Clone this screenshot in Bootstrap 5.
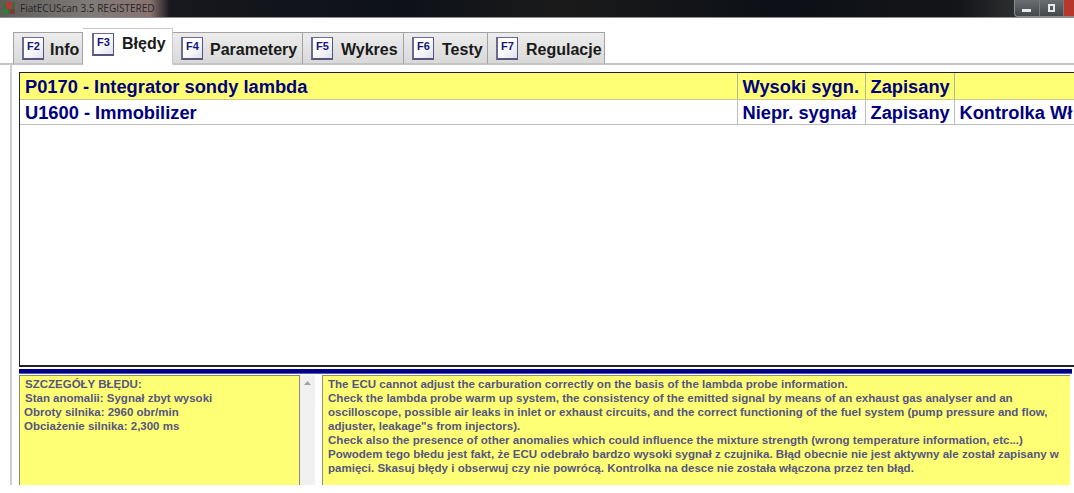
<!DOCTYPE html>
<html lang="pl">
<head>
<meta charset="utf-8">
<title>FiatECUScan</title>
<link href="https://cdn.jsdelivr.net/npm/bootstrap@5.3.0/dist/css/bootstrap.min.css" rel="stylesheet">
<style>
html,body{height:493px;overflow:hidden;background:#fff;font-family:"Liberation Sans",Arial,sans-serif}
.win-title{height:18px;background:linear-gradient(90deg,#5f5c5a 0,#7f7b79 90px,#8a7270 150px,#17181e 170px,#0d1118 400px,#1a1a1a 560px,#0c1016 780px,#141518 960px,#2c2d2f 1012px);border-bottom:1px solid #8f8f8f;color:#262626;font-size:10px;font-family:"Open Sans",sans-serif;line-height:16px;overflow:hidden}
.app-ico{width:14px;height:14px;margin:1px 4px 0 2px;flex:none}
.win-btns{width:60px;height:17px;background:linear-gradient(#6a6e72,#44474a);border-radius:0 0 0 4px;border:1px solid #8a8d90;border-top:0;border-right:0;overflow:hidden}
.wb{flex:1;border-right:1px solid #77797b;display:flex;align-items:center;justify-content:center}
.wb-close{background:#b5382a;flex:0 0 10px;border-right:0}
.wb-min{width:9px;height:3px;background:#e8e8e8;margin-top:5px}
.wb-max{width:7px;height:8px;border:2px solid #e8e8e8}
.tabstrip{height:47px;padding-left:13px;align-items:flex-end;border-bottom:2px solid #c4c4c4;margin-left:0;flex-wrap:nowrap}
.tab-i{height:33px;margin-bottom:-2px;background:linear-gradient(#ececec,#d9d9d9);border:1px solid #a2a2a2;border-bottom:2px solid #c4c4c4;border-left-width:0;padding:0 0 0 8px;font-size:16px;font-weight:700;color:#1a1a1a;gap:8px}
.tab-i:first-child{border-left-width:1px;gap:6px}
.tab-i.tab-p{gap:7px}
.tab-i>span:last-child{padding-top:3px}
.tab-on{height:37px;background:#fff;border-color:#c8c8c8;border-bottom-color:#fff;padding-bottom:4px;padding-left:9px;gap:8px}
.tab-on>span:last-child{padding-top:0}
.fkey{width:22px;height:23px;flex:none;border:1px solid #6c6a92;border-right-color:#55557a;border-bottom:2px solid #55557a;border-left-width:2px;background:linear-gradient(135deg,#fff 40%,#dfe0ee);color:#15157a;font-size:11px;font-weight:700;text-align:center;line-height:17px}
.main-pane{border-left:2px solid #cfcfcf;margin-left:10px;padding:7px 0 0 7px;height:420px}
.grid-wrap{height:295px;border:1px solid #222;border-right:0;border-bottom-width:2px;overflow:hidden;background:#fff}
.err-table{width:1060px;table-layout:fixed;margin:0;font-size:18.3px;font-weight:700;color:#00007e;border-collapse:collapse}
.err-table td{padding:2px 0 0 5px;height:26px;line-height:23px;white-space:nowrap;overflow:hidden;background:transparent;color:#00007e;border:0;border-right:1px solid #b3b3a0;border-bottom:1px solid #bdbdbd;box-shadow:none}
.err-table td:last-child{border-right:0}
.err-table tr.row-hi td{background:#ffff75;border-bottom-color:#c9c9a0}
.err-table tr.row-lo td{height:25px;line-height:22px;border-right-color:#bdbdc8}
.blue-sep{height:5px;background:#00008a;margin-top:2px;border-bottom:1px solid #4f5f9f;margin-right:2px}
.detail-row{height:110px;margin-top:1px;overflow:hidden}
.detail-l{width:281px;flex:none;background:#ffff75;border:1px solid #8a8a70;border-bottom:0;color:#55557e;font-size:11.5px;font-weight:700;line-height:14px;padding:1px 0 0 5px}
.detail-l span{display:block}
.detail-l .nudge{margin-left:-1px}
.scroll-t{width:15px;flex:none;background:#f0f0f0;text-align:center;margin-right:7px}
.scroll-t svg{display:block;margin:6px auto 0}
.detail-r{width:748px;flex:none;background:#ffff75;border:1px solid #8f8f7a;border-bottom:0;border-right:0;color:#55557e;font-size:11.55px;font-weight:700;line-height:14px;padding:1px 0 0 5px}
.detail-r span{display:block;white-space:nowrap}
</style>
</head>
<body>
<div class="win-title d-flex align-items-start">
  <svg class="app-ico" viewBox="0 0 14 14"><rect x="1" y="1" width="12" height="12" rx="2" fill="#3f6a3c"/><rect x="4" y="1" width="6" height="7" fill="#b03a38"/><rect x="1" y="8" width="5" height="5" fill="#2f7f3a"/><rect x="8" y="8" width="5" height="5" fill="#7b3d3a"/></svg>
  <span>FiatECUScan 3.5 REGISTERED</span>
  <div class="win-btns d-flex ms-auto">
    <div class="wb"><div class="wb-min"></div></div>
    <div class="wb"><div class="wb-max"></div></div>
    <div class="wb wb-close"></div>
  </div>
</div>
<div class="tabstrip d-flex">
  <div class="tab-i d-flex align-items-center" style="width:70px"><span class="fkey">F2</span><span>Info</span></div>
  <div class="tab-i tab-on d-flex align-items-center" style="width:90px"><span class="fkey">F3</span><span>Błędy</span></div>
  <div class="tab-i tab-p d-flex align-items-center" style="width:130px"><span class="fkey">F4</span><span>Parametery</span></div>
  <div class="tab-i d-flex align-items-center" style="width:101px"><span class="fkey">F5</span><span>Wykres</span></div>
  <div class="tab-i d-flex align-items-center" style="width:84px"><span class="fkey">F6</span><span>Testy</span></div>
  <div class="tab-i d-flex align-items-center" style="width:117px"><span class="fkey">F7</span><span>Regulacje</span></div>
</div>
<div class="main-pane">
  <div class="grid-wrap">
    <table class="table err-table">
      <colgroup><col style="width:717px"><col style="width:128px"><col style="width:89px"><col style="width:126px"></colgroup>
      <tbody>
        <tr class="row-hi"><td>P0170 - Integrator sondy lambda</td><td>Wysoki sygn.</td><td>Zapisany</td><td></td></tr>
        <tr class="row-lo"><td>U1600 - Immobilizer</td><td>Niepr. sygnał</td><td>Zapisany</td><td>Kontrolka Wł</td></tr>
      </tbody>
    </table>
  </div>
  <div class="blue-sep"></div>
  <div class="detail-row d-flex">
    <div class="detail-l">
      <span>SZCZEGÓŁY BŁĘDU:</span>
      <span>Stan anomalii: Sygnał zbyt wysoki</span>
      <span class="nudge">Obroty silnika: 2960 obr/min</span>
      <span class="nudge">Obciażenie silnika: 2,300 ms</span>
    </div>
    <div class="scroll-t"><svg width="7" height="4" viewBox="0 0 7 4"><path d="M0 4 3.5 0 7 4z" fill="#a0a0a0"/></svg></div>
    <div class="detail-r">
      <span>The ECU cannot adjust the carburation correctly on the basis of the lambda probe information.</span>
      <span>Check the lambda probe warm up system, the consistency of the emitted signal by means of an exhaust gas analyser and an</span>
      <span>oscilloscope, possible air leaks in inlet or exhaust circuits, and the correct functioning of the fuel system (pump pressure and flow,</span>
      <span>adjuster, leakage"s from injectors).</span>
      <span>Check also the presence of other anomalies which could influence the mixture strength (wrong temperature information, etc...)</span>
      <span>Powodem tego błedu jest fakt, że ECU odebrało bardzo wysoki sygnał z czujnika. Błąd obecnie nie jest aktywny ale został zapisany w</span>
      <span>pamięci. Skasuj błędy i obserwuj czy nie powrócą. Kontrolka na desce nie została włączona przez ten błąd.</span>
    </div>
  </div>
</div>
<script src="https://cdn.jsdelivr.net/npm/bootstrap@5.3.0/dist/js/bootstrap.bundle.min.js"></script>
</body>
</html>
